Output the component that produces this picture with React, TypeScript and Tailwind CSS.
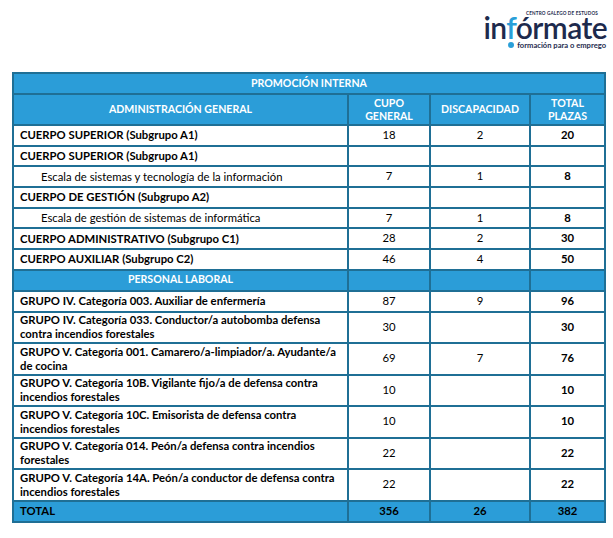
import React from 'react';

type Row = {
  label: string;
  cupo?: string;
  disc?: string;
  total?: string;
  indent?: boolean;
  bold?: boolean;
  tall?: boolean;
};

const admin: Row[] = [
  { label: 'CUERPO SUPERIOR (Subgrupo A1)', cupo: '18', disc: '2', total: '20', bold: true },
  { label: 'CUERPO SUPERIOR (Subgrupo A1)', bold: true },
  { label: 'Escala de sistemas y tecnología de la información', cupo: '7', disc: '1', total: '8', indent: true },
  { label: 'CUERPO DE GESTIÓN (Subgrupo A2)', bold: true },
  { label: 'Escala de gestión de sistemas de informática', cupo: '7', disc: '1', total: '8', indent: true },
  { label: 'CUERPO ADMINISTRATIVO (Subgrupo C1)', cupo: '28', disc: '2', total: '30', bold: true },
  { label: 'CUERPO AUXILIAR (Subgrupo C2)', cupo: '46', disc: '4', total: '50', bold: true },
];

const laboral: Row[] = [
  { label: 'GRUPO IV. Categoría 003. Auxiliar de enfermería', cupo: '87', disc: '9', total: '96', bold: true },
  { label: 'GRUPO IV. Categoría 033. Conductor/a autobomba defensa contra incendios forestales', cupo: '30', total: '30', bold: true, tall: true },
  { label: 'GRUPO V. Categoría 001. Camarero/a-limpiador/a. Ayudante/a de cocina', cupo: '69', disc: '7', total: '76', bold: true, tall: true },
  { label: 'GRUPO V. Categoría 10B. Vigilante fijo/a de defensa contra incendios forestales', cupo: '10', total: '10', bold: true, tall: true },
  { label: 'GRUPO V. Categoría 10C. Emisorista de defensa contra incendios forestales', cupo: '10', total: '10', bold: true, tall: true },
  { label: 'GRUPO V. Categoría 014. Peón/a defensa contra incendios forestales', cupo: '22', total: '22', bold: true, tall: true },
  { label: 'GRUPO V. Categoría 14A. Peón/a conductor de defensa contra incendios forestales', cupo: '22', total: '22', bold: true, tall: true },
];

const cell = 'border-2 border-[#1f6f95] p-0';

function Logo() {
  return (
    <div className="flex flex-col items-end pr-[6px] pt-[11px]" style={{ fontFamily: 'Lato, "Open Sans", sans-serif' }}>
      <div className="text-[4.6px] font-bold tracking-[0.04em] text-[#1d2a4d] leading-[5px] mr-[9px]">
        CENTRO GALEGO DE ESTUDOS
      </div>
      <div className="text-[30px] leading-[22px] font-semibold tracking-[-0.02em] text-[#1d2a4d]">
        in<span className="text-[#2a9fd8]">f</span>órmate
      </div>
      <div className="flex items-center mt-[3px] text-[7.6px] font-bold leading-[8px] text-[#1d2a4d] mr-[1px]">
        <span className="inline-block w-[6px] h-[6px] rounded-full bg-[#2a9fd8] mr-[3px]" />
        formación para o emprego
      </div>
    </div>
  );
}

function DataRow({ row }: { row: Row }) {
  return (
    <tr className={row.tall ? 'h-[31.5px]' : 'h-[20.7px]'}>
      <td
        className={`${cell} ${row.indent ? 'pl-[27px]' : 'pl-[6px]'} pr-[8px] ${row.bold ? 'font-bold' : ''} leading-[14px] align-middle`}
      >
        {row.label}
      </td>
      <td className={`${cell} text-center`}>{row.cupo}</td>
      <td className={`${cell} text-center`}>{row.disc}</td>
      <td className={`${cell} text-center font-bold`}>{row.total}</td>
    </tr>
  );
}

export default function App() {
  return (
    <div className="w-[613px] h-[538px] bg-white overflow-hidden relative">
      <div className="h-[72px] flex justify-end">
        <Logo />
      </div>
      <table
        className="ml-[12px] w-[592px] border-collapse text-[11.3px] text-black table-fixed"
        style={{ fontFamily: 'Lato, "Liberation Sans", sans-serif' }}
      >
        <colgroup>
          <col className="w-[335px]" />
          <col className="w-[82px]" />
          <col className="w-[100px]" />
          <col className="w-[75px]" />
        </colgroup>
        <tbody>
          <tr className="h-[21px] bg-[#2b9dd8] text-[10.6px]">
            <td colSpan={4} className={`${cell} text-center font-bold text-white`}>
              PROMOCIÓN INTERNA
            </td>
          </tr>
          <tr className="h-[31px] bg-[#2b9dd8] text-white font-bold text-[10.6px]">
            <td className={`${cell} text-center`}>ADMINISTRACIÓN GENERAL</td>
            <td className={`${cell} text-center leading-[13px]`}>
              CUPO
              <br />
              GENERAL
            </td>
            <td className={`${cell} text-center`}>DISCAPACIDAD</td>
            <td className={`${cell} text-center leading-[13px]`}>
              TOTAL
              <br />
              PLAZAS
            </td>
          </tr>
          {admin.map((r, i) => (
            <DataRow key={'a' + i} row={r} />
          ))}
          <tr className="h-[21px] bg-[#2b9dd8] text-[10.6px]">
            <td className={`${cell} text-center font-bold text-white`}>PERSONAL LABORAL</td>
            <td className={cell} />
            <td className={cell} />
            <td className={cell} />
          </tr>
          {laboral.map((r, i) => (
            <DataRow key={'l' + i} row={r} />
          ))}
          <tr className="h-[21px] bg-[#2b9dd8] font-bold">
            <td className={`${cell} pl-[6px]`}>TOTAL</td>
            <td className={`${cell} text-center`}>356</td>
            <td className={`${cell} text-center`}>26</td>
            <td className={`${cell} text-center`}>382</td>
          </tr>
        </tbody>
      </table>
    </div>
  );
}
